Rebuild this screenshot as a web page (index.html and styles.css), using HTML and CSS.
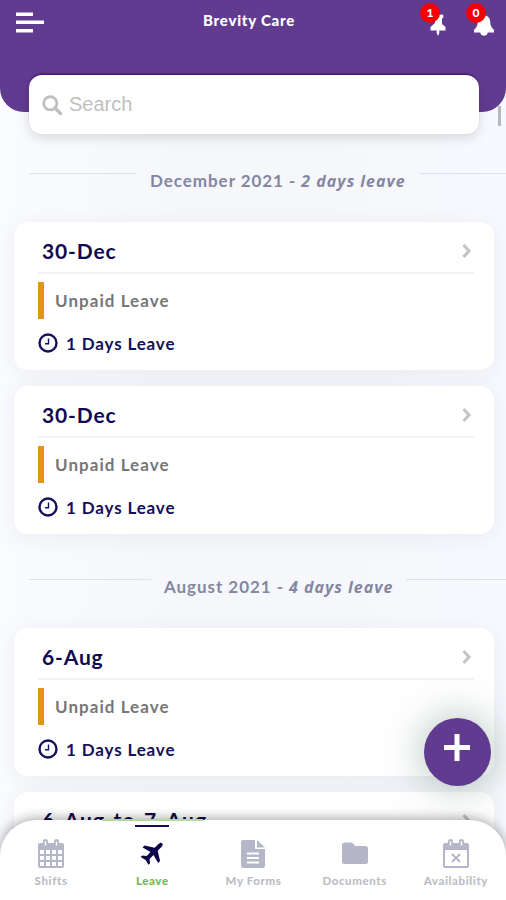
FILE: index.html
```html
<!DOCTYPE html>
<html lang="en">
<head>
<meta charset="utf-8">
<meta name="viewport" content="width=device-width">
<title>Brevity Care</title>
<link rel="stylesheet" href="styles.css">
</head>
<body>
<svg class="defs" aria-hidden="true">
  <symbol id="clock" viewBox="0 0 20 20"><circle cx="10" cy="10" r="8.500" fill="none" stroke="currentColor" stroke-width="2.400"/><path d="M10.500 5.500v5.300H7" fill="none" stroke="currentColor" stroke-width="1.400"/></symbol>
  <symbol id="chevron" viewBox="0 0 12 16"><path d="M2.500 2l5.500 6-5.500 6" fill="none" stroke="currentColor" stroke-width="3.200"/></symbol>
</svg>
<div class="app">
  <header class="header">
    <div class="bar">
      <svg class="menu" viewBox="0 0 28 21"><path d="M0 2.200h17M0 10.200h28M0 18.700h17" stroke="#fff" stroke-width="3.600"/></svg>
      <h1 class="title">Brevity Care</h1>
      <div class="alerts">
        <div class="alert pin"><svg viewBox="0 0 16 22"><path d="M5 1l8-.5.500 3-1.500 1V10l3.500 3v3.500H9.300V19L8 22l-1.300-3v-2.500H.5V13L5 9z" fill="#fff"/></svg><span class="badge">1</span></div>
        <div class="alert bell"><svg viewBox="0 0 22 22"><path d="M11 1.500C7 1.500 5 4 4.800 8 4.600 12 3.500 13.500 1 16v2.500h6.200c.8 4.300 6.800 4.300 7.600 0H21V16c-2.500-2.500-3.600-4-3.800-8C17 4 15 1.500 11 1.500z" fill="#fff"/></svg><span class="badge">0</span></div>
      </div>
    </div>
    <div class="search"><svg viewBox="0 0 20 20"><circle cx="8.300" cy="8.300" r="6.600" fill="none" stroke="currentColor" stroke-width="2.800"/><path d="M13 13l5.500 5.500" stroke="currentColor" stroke-width="3.400" stroke-linecap="round"/></svg><span>Search</span></div>
  </header>
  <main class="list">
    <h2 class="month december"><span>December 2021 - <em>2 days leave</em></span></h2>
    <article class="card">
      <div class="date"><span>30-Dec</span><svg><use href="#chevron"/></svg></div>
      <div class="kind"><span>Unpaid Leave</span></div>
      <div class="days"><svg><use href="#clock"/></svg><span>1 Days Leave</span></div>
    </article>
    <article class="card">
      <div class="date"><span>30-Dec</span><svg><use href="#chevron"/></svg></div>
      <div class="kind"><span>Unpaid Leave</span></div>
      <div class="days"><svg><use href="#clock"/></svg><span>1 Days Leave</span></div>
    </article>
    <h2 class="month august"><span>August 2021 - <em>4 days leave</em></span></h2>
    <article class="card">
      <div class="date"><span>6-Aug</span><svg><use href="#chevron"/></svg></div>
      <div class="kind"><span>Unpaid Leave</span></div>
      <div class="days"><svg><use href="#clock"/></svg><span>1 Days Leave</span></div>
    </article>
    <article class="card">
      <div class="date"><span class="range">6-Aug to 7-Aug</span><svg><use href="#chevron"/></svg></div>
    </article>
  </main>
  <i class="scrollbar"></i>
  <button class="add" aria-label="Add leave"><svg viewBox="0 0 26 27"><path d="M13 0v27M0 13.500h26" stroke="#fff" stroke-width="5"/></svg></button>
  <nav class="tabs">
    <i class="glow"></i>
    <a class="tab"><svg viewBox="0 0 28 30"><path fill="currentColor" fill-rule="evenodd" d="M3 4h3V2.500a2.500 2.500 0 0 1 5 0V4h6V2.500a2.500 2.500 0 0 1 5 0V4h3a2 2 0 0 1 2 2v21a2 2 0 0 1-2 2H3a2 2 0 0 1-2-2V6a2 2 0 0 1 2-2zm0 7v4h4v-4zm6 0v4h4v-4zm6 0v4h4v-4zm6 0v4h4v-4zM3 17v4h4v-4zm6 0v4h4v-4zm6 0v4h4v-4zm6 0v4h4v-4zM3 23v4h4v-4zm6 0v4h4v-4zm6 0v4h4v-4zm6 0v4h4v-4z"/><path d="M8.500 2.500v4M19.500 2.500v4" stroke="#fff" stroke-width="1.400"/></svg><span>Shifts</span></a>
    <a class="tab active"><svg viewBox="0 0 28 30"><path transform="translate(15 13.500) rotate(45)" fill="currentColor" d="M0-13C1.500-13 2.100-11.500 2.100-9.500V-4.500L11 1V3.800L2.100 1.400V7L5.500 9.700V12L0 10.500-5.500 12V9.700L-2.100 7V1.400L-11 3.800V1L-2.100-4.500V-9.500C-2.100-11.500-1.500-13 0-13z"/></svg><span>Leave</span></a>
    <a class="tab"><svg viewBox="0 0 28 30"><path fill="currentColor" d="M4 1h12v9h10v17a2 2 0 0 1-2 2H4a2 2 0 0 1-2-2V3a2 2 0 0 1 2-2zM18 1l8 7.500h-8z"/><path d="M8 14.500h12M8 19h12M8 23.500h12" stroke="#fff" stroke-width="1.800"/></svg><span>My Forms</span></a>
    <a class="tab"><svg viewBox="0 0 28 30"><path fill="currentColor" d="M3.500 3.500H11l3.500 3.500h10A2.500 2.500 0 0 1 27 9.500v13a2.500 2.500 0 0 1-2.500 2.500h-21A2.500 2.500 0 0 1 1 22.500V6a2.500 2.500 0 0 1 2.500-2.500z"/></svg><span>Documents</span></a>
    <a class="tab"><svg viewBox="0 0 28 30"><path fill="currentColor" fill-rule="evenodd" d="M3 4h3V2.500a2.500 2.500 0 0 1 5 0V4h6V2.500a2.500 2.500 0 0 1 5 0V4h3a2 2 0 0 1 2 2v21a2 2 0 0 1-2 2H3a2 2 0 0 1-2-2V6a2 2 0 0 1 2-2zm0 7v16h22V11z"/><path d="M8.500 2.500v4M19.500 2.500v4" stroke="#fff" stroke-width="1.400"/><path d="M10 15l8 8M18 15l-8 8" stroke="currentColor" stroke-width="2"/></svg><span>Availability</span></a>
  </nav>
</div>
</body>
</html>
```
FILE: styles.css
```css
* { box-sizing: border-box; }
body { margin: 0; font-family: Lato, "Liberation Sans", sans-serif; font-weight: 700; }
.defs { position: absolute; width: 0; height: 0; }
.app { position: relative; width: 506px; height: 900px; overflow: hidden; background: linear-gradient(90deg, #fafbff, #f5f7fb 35%, #f5f7fb 65%, #f8f9fe); }
.header { position: relative; z-index: 1; height: 112px; background: #613b90; border-radius: 0 0 24px 24px; }
.bar { display: grid; grid-template-columns: 100px 1fr 100px; height: 75px; align-items: start; }
.menu { width: 28px; height: 21px; margin: 12px 0 0 16px; }
.title { margin: 10px 0 0; text-align: center; color: #fff; font-size: 15px; line-height: 20px; font-weight: 900; letter-spacing: .75px; padding-right: 8px; white-space: nowrap; }
.alerts { display: flex; gap: 25px; margin-top: 14px; padding-left: 24px; }
.alert { position: relative; height: 22px; }
.alert svg { display: block; width: 100%; height: 22px; }
.pin { width: 16px; }
.bell { width: 22px; margin-left: 2px; }
.badge { position: absolute; top: -11px; left: -10px; width: 20px; height: 20px; border-radius: 50%; background: #f60008; color: #fff; text-align: center; font-size: 12px; line-height: 20px; font-weight: 900; }
.bell .badge { left: -7px; }
.search { width: 450px; height: 59px; margin-left: 29px; border-radius: 13px; background: #fff; box-shadow: 0 4px 12px #0002, 0 -2px 2px -1px #3f086f; display: flex; align-items: center; gap: 7px; padding-left: 13px; color: #bfbfbf; font: 400 20px "Liberation Sans", sans-serif; }
.search svg { width: 20px; height: 20px; }
.list { padding: 60px 12px 0 14px; }
.month { display: flex; align-items: flex-start; margin: 0 -12px 0 15px; height: 50px; font-size: 17px; line-height: 18px; letter-spacing: .95px; color: #8586a0; white-space: nowrap; }
.month em { font-family: "Open Sans", sans-serif; font-size: 16px; letter-spacing: 1px; }
.month::before, .month::after { content: ""; height: 1px; margin-top: 1px; background: #dfe2e8; }
.month::before { width: 107px; }
.month::after { flex: 1; margin-left: 13px; }
.month span { margin-left: 14px; width: 256px; }
.month.august { margin-top: 44px; height: 50px; }
.august::before { width: 122px; }
.august span { margin-left: 13px; width: 229px; }
.card { width: 480px; height: 148px; margin-bottom: 16px; padding: 9px 20px 0 24px; border-radius: 14px; background: #fff; box-shadow: 0 4px 22px #28304010; }
.date { display: flex; align-items: center; justify-content: space-between; height: 43px; padding: 0 1px 2px 4px; border-bottom: 2px solid #f3f3f5; color: #10094f; font-size: 21px; letter-spacing: .85px; }
.date svg { width: 12px; height: 16px; color: #c5c5c5; }
.range { margin-top: -2px; letter-spacing: 1.2px; word-spacing: 2px; }
.kind { display: flex; align-items: center; height: 37px; margin-top: 8px; padding: 0 0 1px 11px; border-left: 6px solid #e29512; color: #777; font-size: 17px; letter-spacing: 1.05px; }
.days { display: flex; align-items: center; gap: 8px; margin-top: 14px; height: 20px; color: #15105a; font-size: 17px; letter-spacing: .85px; }
.days svg { width: 20px; height: 20px; }
.scrollbar { position: absolute; z-index: 0; right: 5px; top: 106px; width: 3px; height: 20px; background: #b8b9bd; }
.add { position: absolute; left: 424px; top: 718px; width: 67px; height: 68px; border: 0; padding: 0 2px 10px 0; border-radius: 50%; background: #613b90; display: flex; align-items: center; justify-content: center; box-shadow: 0 0 42px #5a826c85; }
.add svg { width: 26px; height: 27px; }
.tabs { position: absolute; inset: 820px 0 0; display: grid; grid-template-columns: repeat(5, 1fr); background: #fff; border-radius: 36px 36px 0 0; box-shadow: 0 -2px 12px #0005; }
.tab { position: relative; display: flex; flex-direction: column; align-items: center; padding: 19px 0 0 1px; color: #b5b6c8; }
.tab svg { width: 28px; height: 30px; }
.tab span { margin-top: 5px; font-size: 11.5px; line-height: 14px; font-weight: 900; letter-spacing: .6px; color: #bcbdc5; white-space: nowrap; }
.tab.active { color: #0d0648; }
.tab.active span { color: #75b854; }
.active::before { content: ""; position: absolute; top: 5px; width: 34px; height: 2px; background: #160f55; }
.glow { position: absolute; left: 102px; top: -1px; width: 101px; height: 2px; background: #b6d6a3; }
```
